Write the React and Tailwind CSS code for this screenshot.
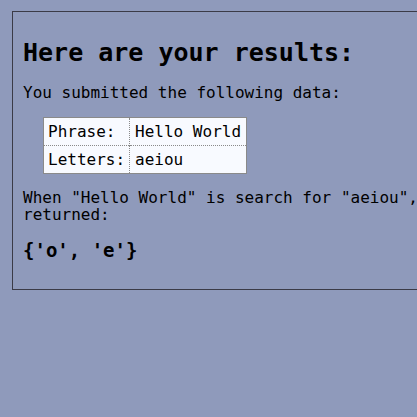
import React from "react";

const mono = { fontFamily: '"DejaVu Sans Mono", monospace' };

const rows = [
  { label: "Phrase:", value: "Hello World" },
  { label: "Letters:", value: "aeiou" },
];

export default function App() {
  return (
    <div
      className="h-[417px] w-full overflow-hidden bg-[#8f9abb] pt-[11px] pl-[12px] text-black"
      style={mono}
    >
      <div className="w-[640px] border border-[#3b3b47] pl-[10px] pt-[27px] pb-[27px]">
        <h1 className="text-[25px] leading-[28px] font-bold">
          Here are your results:
        </h1>
        <p className="mt-[16px] text-[16px] leading-[20px]">
          You submitted the following data:
        </p>
        <table className="mt-[14px] ml-[20px] border border-[#8a8a8a] bg-[#f8faff] text-[16px] leading-[19px] border-collapse">
          <tbody>
            {rows.map((r, i) => (
              <tr
                key={r.label}
                className={i > 0 ? "border-t border-dotted border-[#8a8a8a]" : ""}
              >
                <td className="px-[4px] py-[4px] border-r border-dotted border-[#8a8a8a]">
                  {r.label}
                </td>
                <td className="px-[5px] py-[4px]">{r.value}</td>
              </tr>
            ))}
          </tbody>
        </table>
        <p className="mt-[15px] text-[16px] leading-[17px]">
          When "Hello World" is search for "aeiou", the following set is
          <br />
          returned:
        </p>
        <p className="mt-[16px] text-[19px] leading-[23px] font-bold">
          {"{'o', 'e'}"}
        </p>
      </div>
    </div>
  );
}
